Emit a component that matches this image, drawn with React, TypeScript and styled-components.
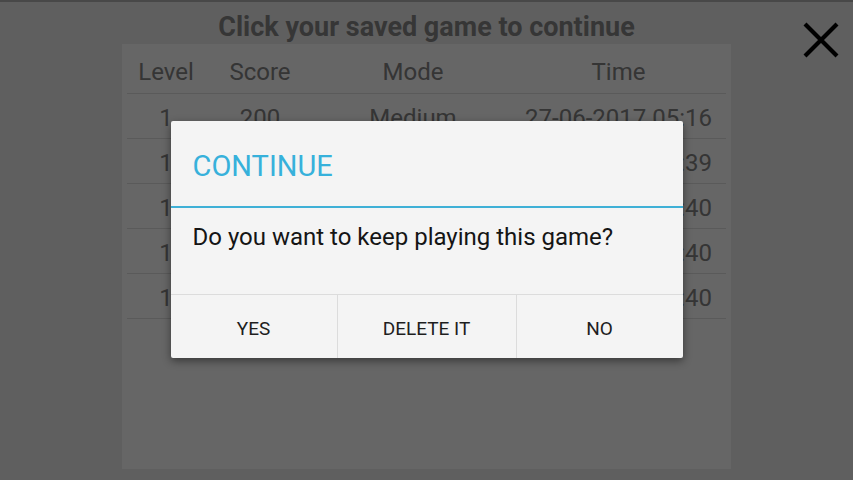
import React from 'react'
import styled, { createGlobalStyle } from 'styled-components'

const GlobalStyle = createGlobalStyle`
  html, body {
    margin: 0;
    padding: 0;
    font-family: Roboto, 'Liberation Sans', sans-serif;
  }
`

const Page = styled.div`
  position: relative;
  width: 853px;
  height: 480px;
  overflow: hidden;
  background: #eeeeee;
  display: flex;
  flex-direction: column;
  align-items: center;
`

const StatusStrip = styled.div`
  align-self: stretch;
  height: 2px;
  background: #b4b4b4;
`

const Heading = styled.h1`
  margin: 0;
  height: 42px;
  line-height: 50px;
  font-size: 27px;
  font-weight: 700;
  color: #888888;
  text-align: center;
`

const Panel = styled.div`
  width: 609px;
  height: 425px;
  background: #ffffff;
  padding: 0 5px;
  box-sizing: border-box;
`

const Row = styled.div<{ $head?: boolean }>`
  display: grid;
  grid-template-columns: 78px 110px 196px 1fr;
  height: ${(p) => (p.$head ? '50px' : '45px')};
  line-height: ${(p) => (p.$head ? '56px' : '49px')};
  border-bottom: 1px solid #e2e2e2;
  box-sizing: border-box;
  font-size: 24px;
  color: #848484;
`

const Cell = styled.div`
  text-align: center;
  white-space: nowrap;
`

const CloseButton = styled.button`
  position: absolute;
  top: 21px;
  right: 13px;
  width: 38px;
  height: 38px;
  padding: 0;
  border: none;
  background: none;
  z-index: 2;
`

const Backdrop = styled.div`
  position: absolute;
  inset: 0;
  background: rgba(0, 0, 0, 0.6);
  display: flex;
  align-items: center;
  justify-content: center;
  z-index: 1;
`

const Dialog = styled.div`
  width: 512px;
  height: 237px;
  margin-top: -1px;
  background: #f4f4f4;
  border-radius: 2px;
  box-shadow: 0 3px 8px rgba(0, 0, 0, 0.45);
  display: flex;
  flex-direction: column;
  overflow: hidden;
`

const DialogTitle = styled.div`
  height: 87px;
  padding: 4px 22px 0;
  display: flex;
  align-items: center;
  font-size: 29px;
  color: #37b1db;
  border-bottom: 2px solid #3fb0d6;
  box-sizing: border-box;
`

const Message = styled.div`
  flex: 1;
  padding: 15px 22px 0;
  font-size: 24px;
  color: #151515;
`

const Buttons = styled.div`
  display: grid;
  grid-template-columns: 166px 179px 1fr;
  height: 64px;
  box-sizing: border-box;
  border-top: 1px solid #dcdcdc;
`

const DialogButton = styled.button`
  border: none;
  background: transparent;
  font-family: Roboto, 'Liberation Sans', sans-serif;
  font-size: 19px;
  color: #1e1e1e;
  padding: 3px 0 0;
  & + & {
    border-left: 1px solid #dcdcdc;
  }
`

const rows = [
  ['1', '200', 'Medium', '27-06-2017 05:16'],
  ['1', '150', 'Easy', '27-06-2017 05:39'],
  ['1', '100', 'Hard', '27-06-2017 05:40'],
  ['1', '100', 'Easy', '27-06-2017 05:40'],
  ['1', '50', 'Medium', '27-06-2017 05:40'],
]

export default function App() {
  return (
    <>
      <GlobalStyle />
      <Page>
        <StatusStrip />
        <Heading>Click your saved game to continue</Heading>
        <Panel>
          <Row $head>
            <Cell>Level</Cell>
            <Cell>Score</Cell>
            <Cell>Mode</Cell>
            <Cell>Time</Cell>
          </Row>
          {rows.map((r, i) => (
            <Row key={i}>
              {r.map((c, j) => (
                <Cell key={j}>{c}</Cell>
              ))}
            </Row>
          ))}
        </Panel>
        <CloseButton aria-label="close">
          <svg width="38" height="38" viewBox="0 0 38 38">
            <path d="M3 3 L35 35 M35 3 L3 35" stroke="#000" strokeWidth="4.2" />
          </svg>
        </CloseButton>
        <Backdrop>
          <Dialog>
            <DialogTitle>CONTINUE</DialogTitle>
            <Message>Do you want to keep playing this game?</Message>
            <Buttons>
              <DialogButton>YES</DialogButton>
              <DialogButton>DELETE IT</DialogButton>
              <DialogButton>NO</DialogButton>
            </Buttons>
          </Dialog>
        </Backdrop>
      </Page>
    </>
  )
}
